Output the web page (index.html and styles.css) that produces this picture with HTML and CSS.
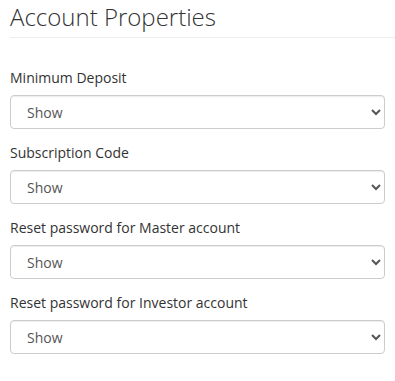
FILE: index.html
```html
<!DOCTYPE html>
<html lang="en">
<head>
    <meta charset="UTF-8">
    <meta name="viewport" content="width=device-width, initial-scale=1.0">
    <title>Account Properties</title>
    <link rel="stylesheet" href="styles.css">
</head>
<body>
    <div class="page">
        <h2 class="page-title">Account Properties</h2>

        <div class="fields">
            <div class="form-group">
                <label for="minDeposit">Minimum Deposit</label>
                <select id="minDeposit" class="form-control">
                    <option>Show</option>
                    <option>Hide</option>
                </select>
            </div>

            <div class="form-group">
                <label for="subCode">Subscription Code</label>
                <select id="subCode" class="form-control">
                    <option>Show</option>
                    <option>Hide</option>
                </select>
            </div>

            <div class="form-group">
                <label for="resetMaster">Reset password for Master account</label>
                <select id="resetMaster" class="form-control">
                    <option>Show</option>
                    <option>Hide</option>
                </select>
            </div>

            <div class="form-group">
                <label for="resetInvestor">Reset password for Investor account</label>
                <select id="resetInvestor" class="form-control">
                    <option>Show</option>
                    <option>Hide</option>
                </select>
            </div>
        </div>
    </div>
</body>
</html>
```

FILE: styles.css
```css
body {
    margin: 0;
    padding: 0;
    background-color: #fff;
    font-family: "Open Sans", "Liberation Sans", sans-serif;
    font-size: 14px;
    line-height: 1.42857;
    color: #333;
}

.page {
    padding-left: 10px;
}

.page-title {
    margin: 4px 0 0;
    padding-bottom: 7px;
    font-size: 24px;
    font-weight: 300;
    line-height: 1.1;
    color: #333;
    border-bottom: 1px solid #eee;
}

.fields {
    padding: 30px 10px 0 0;
}

.form-group {
    margin-bottom: 14px;
}

.form-group label {
    display: block;
    margin-bottom: 7px;
    font-weight: normal;
    color: #333;
}

.form-control {
    display: block;
    width: 100%;
    height: 34px;
    padding: 6px 12px;
    font-family: inherit;
    font-size: 14px;
    color: #555;
    background-color: #fff;
    border: 1px solid #ccc;
    border-radius: 4px;
    box-shadow: inset 0 1px 1px rgba(0, 0, 0, 0.075);
}
```
